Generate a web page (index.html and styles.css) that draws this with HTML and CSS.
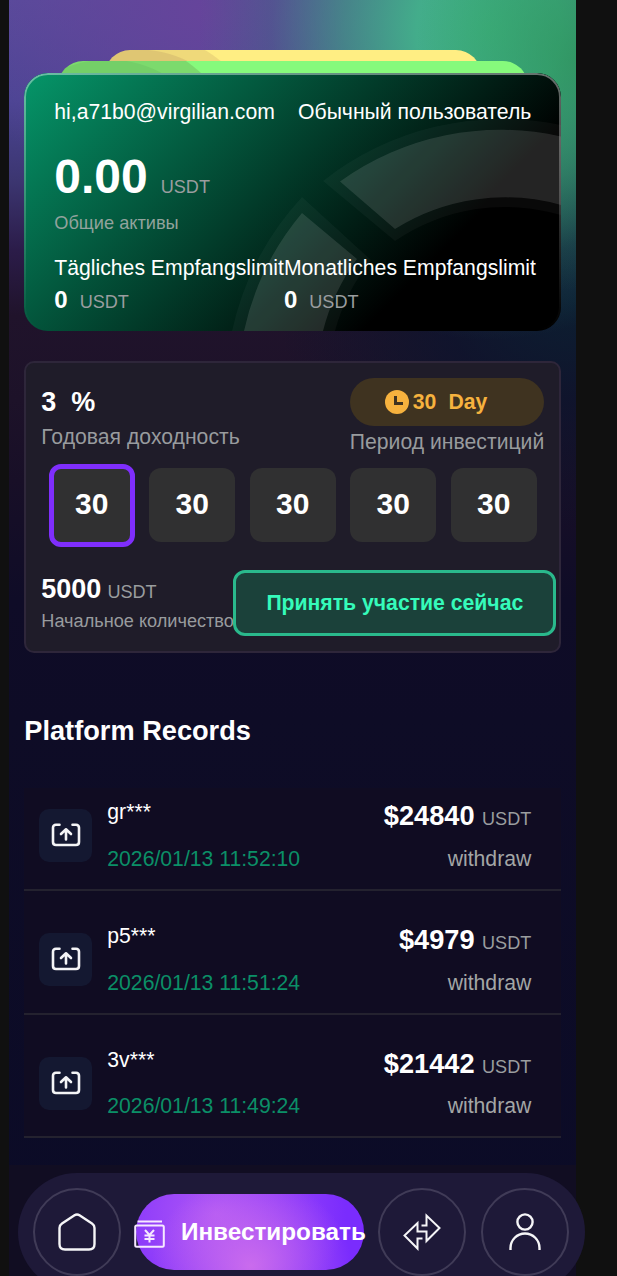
FILE: index.html
```html
<!DOCTYPE html>
<html lang="ru">
<head>
    <meta charset="UTF-8">
    <meta name="viewport" content="width=device-width, initial-scale=1.0">
    <title>Platform</title>
    <link rel="stylesheet" href="styles.css">
</head>
<body>
    <svg class="sprite" xmlns="http://www.w3.org/2000/svg">
        <symbol id="withdraw" viewBox="0 0 30 24" fill="none" stroke="#f4f4f6" stroke-width="2.600" stroke-linecap="round" stroke-linejoin="round">
            <path d="M8.500 1.800H5Q2 1.800 2 4.800V19Q2 22 5 22H25Q28 22 28 19V4.800Q28 1.800 25 1.800H21.500"/>
            <path d="M15 16.500V7M10 11L15 6.300L20 11"/>
        </symbol>
    </svg>

    <div class="app">
        <div class="stack">
            <div class="sheet sheet-yellow"></div>
            <div class="sheet sheet-green"></div>
        </div>

        <section class="card">
            <svg class="card-art" viewBox="24 73 537 258">
                <g fill="#fff" fill-opacity=".035">
                    <path d="M323 181A289 289 0 0 1 561 125V215A196 196 0 0 0 395 241Z"/>
                    <path d="M302 197L371 260A196 196 0 0 0 335 331H232A289 289 0 0 1 302 197Z"/>
                </g>
                <g fill="#fff" fill-opacity=".11">
                    <path d="M340 181.500A275 275 0 0 1 561 136.500V205A208 208 0 0 0 395 229Z"/>
                    <path d="M302 213L357 259A208 208 0 0 0 323 331H244A275 275 0 0 1 302 213Z"/>
                </g>
            </svg>
            <div class="card-head">
                <span>hi,a71b0@virgilian.com</span>
                <span class="level">Обычный пользователь</span>
            </div>
            <div class="balance"><b>0.00</b><span class="unit">USDT</span></div>
            <div class="balance-label">Общие активы</div>
            <div class="limits">
                <div class="limit">
                    <div>Tägliches Empfangslimit</div>
                    <div class="limit-value"><b>0</b><span class="unit">USDT</span></div>
                </div>
                <div class="limit">
                    <div>Monatliches Empfangslimit</div>
                    <div class="limit-value"><b>0</b><span class="unit">USDT</span></div>
                </div>
            </div>
        </section>

        <section class="plan">
            <div class="plan-head">
                <div class="rate">
                    <div class="rate-value"><b>3</b><b>%</b></div>
                    <div class="muted">Годовая доходность</div>
                </div>
                <div class="period">
                    <div class="period-pill">
                        <svg class="clock" viewBox="0 0 24 24">
                            <circle cx="12" cy="12" r="12" fill="#f6b23e"/>
                            <path d="M10.500 6V13.500H18" fill="none" stroke="#3f3320" stroke-width="3"/>
                        </svg>
                        <b>30</b><b>Day</b>
                    </div>
                    <div class="muted">Период инвестиций</div>
                </div>
            </div>
            <div class="days">
                <div class="day active">30</div>
                <div class="day">30</div>
                <div class="day">30</div>
                <div class="day">30</div>
                <div class="day">30</div>
            </div>
            <div class="plan-foot">
                <div class="amount">
                    <div class="amount-value"><b>5000</b><span class="unit">USDT</span></div>
                    <div class="amount-label">Начальное количество</div>
                </div>
                <button class="join">Принять участие сейчас</button>
            </div>
        </section>

        <h2 class="title">Platform Records</h2>

        <section class="records">
            <div class="record">
                <div class="record-icon"><svg><use href="#withdraw"/></svg></div>
                <div class="record-info">
                    <div class="name">gr***</div>
                    <div class="date">2026/01/13 11:52:10</div>
                </div>
                <div class="record-sum">
                    <div class="sum"><b>$24840</b><span class="unit">USDT</span></div>
                    <div class="type">withdraw</div>
                </div>
            </div>
            <div class="record">
                <div class="record-icon"><svg><use href="#withdraw"/></svg></div>
                <div class="record-info">
                    <div class="name">p5***</div>
                    <div class="date">2026/01/13 11:51:24</div>
                </div>
                <div class="record-sum">
                    <div class="sum"><b>$4979</b><span class="unit">USDT</span></div>
                    <div class="type">withdraw</div>
                </div>
            </div>
            <div class="record">
                <div class="record-icon"><svg><use href="#withdraw"/></svg></div>
                <div class="record-info">
                    <div class="name">3v***</div>
                    <div class="date">2026/01/13 11:49:24</div>
                </div>
                <div class="record-sum">
                    <div class="sum"><b>$21442</b><span class="unit">USDT</span></div>
                    <div class="type">withdraw</div>
                </div>
            </div>
        </section>

        <footer class="footer">
            <nav class="tabs">
                <a class="tab">
                    <svg width="38" height="38" viewBox="0 0 38 38" fill="none" stroke="#f5f5f7" stroke-width="2.400" stroke-linejoin="round">
                        <path d="M16.500 2.300Q19 .700 21.500 2.300L34 10.500Q36.500 12.200 36.500 15V31Q36.500 36.500 31 36.500H7Q1.500 36.500 1.500 31V15Q1.500 12.200 4 10.500Z"/>
                    </svg>
                </a>
                <a class="tab-active">
                    <svg width="31" height="28" viewBox="0 0 31 28" fill="none" stroke="#f6e9ff" stroke-width="2">
                        <path d="M3.500 1.500H28"/>
                        <rect x="1.200" y="5.500" width="28.600" height="21.300" rx="1.500"/>
                        <path d="M11 10L15.500 15L20 10M15.500 15V22.500M10.500 15.500H20.500M10.500 19H20.500"/>
                    </svg>
                    <b>Инвестировать</b>
                </a>
                <a class="tab">
                    <svg width="38" height="38" viewBox="0 0 38 38" fill="none" stroke="#f5f5f7" stroke-width="2">
                        <path d="M18.500 12.500H23.500V2.500L36.500 15L23.500 28V18.500H14.500V10L1.500 22.500L14.500 35.500V25.500H19.500"/>
                    </svg>
                </a>
                <a class="tab">
                    <svg width="32" height="38" viewBox="0 0 32 38" fill="none" stroke="#f5f5f7" stroke-width="2.400">
                        <circle cx="16" cy="9" r="7.600"/>
                        <path d="M1.500 37V35A14.500 14.500 0 0 1 30.500 35V37"/>
                    </svg>
                </a>
            </nav>
        </footer>
    </div>
</body>
</html>
```
FILE: styles.css
```css
* {
    box-sizing: border-box;
}

html,
body {
    margin: 0;
    height: 1276px;
    overflow: hidden;
}

body {
    background: #101010;
    color: #fff;
    font-family: "Liberation Sans", Arial, sans-serif;
    font-size: 21.2px;
    line-height: 24px;
    padding-left: 9.3px;
    white-space: nowrap;
}

.sprite {
    display: none;
}

.app {
    width: 567px;
    height: 1276px;
    padding: 50px 15px 0;
    background:
        radial-gradient(ellipse 160px 230px at 567px 60px, rgba(42, 145, 84, .7) 0, rgba(42, 145, 84, 0) 100%),
        radial-gradient(ellipse 290px 310px at 480px 30px, #40b384 0, rgba(66, 178, 138, .95) 25%, rgba(60, 160, 130, .68) 50%, rgba(45, 120, 120, .28) 75%, rgba(20, 80, 90, 0) 100%),
        radial-gradient(ellipse 260px 200px at 200px 10px, #66449b 0, rgba(102, 68, 155, 0) 100%),
        radial-gradient(ellipse 300px 230px at 567px 300px, rgba(10, 32, 50, .9) 0, rgba(10, 20, 45, .7) 45%, rgba(10, 20, 45, 0) 100%),
        linear-gradient(to bottom, #574b9b 0, #4b4594 100px, #3c3671 180px, #2b1c49 250px, #20132b 315px, #1d1229 400px, #180f27 480px, #0f0c27 600px, #0e0c26 720px, #0b0b27 100%);
}

/* the two sheets behind the main card */
.stack {
    height: 23px;
    display: flex;
    flex-direction: column;
    align-items: center;
    overflow: hidden;
}

.sheet {
    flex: none;
    height: 50px;
    border-radius: 34px;
}

.sheet-yellow {
    width: 376px;
    background: radial-gradient(circle at 33px 112px, #dfc673 0 112px, #efd97a 113px 130px, #ffee83 131px);
}

.sheet-green {
    width: 470px;
    margin-top: -39px;
    background: radial-gradient(circle at 50px 112px, #74cf68 0 113px, #7cda6d 114px 136px, #86fa7c 137px);
}

.card {
    position: relative;
    height: 258px;
    padding: 27px 30px 0;
    border-radius: 24px;
    background: linear-gradient(135deg, #059669 0, #000 75%);
    overflow: hidden;
}

.card::after {
    content: "";
    position: absolute;
    inset: 0;
    border: 2px solid rgba(255, 255, 255, .4);
    border-radius: 24px;
    -webkit-mask-image: linear-gradient(to bottom, #000, transparent);
    mask-image: linear-gradient(to bottom, #000, transparent);
}

.card-art {
    position: absolute;
    inset: 0;
    width: 100%;
    height: 100%;
}

.card-head,
.balance,
.balance-label,
.limits {
    position: relative;
}

.card-head {
    display: flex;
    justify-content: space-between;
}

.unit {
    color: #9a9d9f;
    font-size: 18.100px;
}

.balance {
    height: 56px;
    margin-top: 25px;
    line-height: 56px;
}

.balance b {
    font-size: 48px;
    margin-right: 13px;
}

.balance-label {
    margin-top: 6px;
    color: #92a39d;
    font-size: 18.200px;
}

.limits {
    display: flex;
    margin-top: 21px;
}

.limit-value {
    margin-top: 8px;
}

.limit-value b {
    font-size: 24px;
    margin-right: 12px;
}

.plan {
    height: 292px;
    margin-top: 30px;
    padding: 15px 15px 0;
    border: 2px solid #2e263a;
    border-radius: 10px;
    background: #1f1c29;
}

.plan-head {
    display: flex;
    justify-content: space-between;
}

.muted {
    color: #989b9e;
}

.rate-value {
    height: 48px;
    display: flex;
    gap: 15px;
    font-size: 27px;
    line-height: 48px;
}

.rate .muted {
    margin-top: -1px;
}

.period-pill {
    display: flex;
    align-items: center;
    height: 48px;
    padding-left: 35px;
    border-radius: 24px;
    background: #3f3320;
    color: #f6b23e;
}

.clock {
    width: 24px;
    height: 24px;
    margin-right: 4px;
}

.period-pill b + b {
    margin-left: 12px;
}

.period .muted {
    margin-top: 4px;
}

.days {
    display: flex;
    align-items: center;
    gap: 14.500px;
    height: 84px;
    margin: 9px 0 0 7.400px;
}

.day {
    flex: none;
    width: 86px;
    height: 74px;
    border-radius: 12px;
    background: #303031;
    font-size: 30px;
    font-weight: bold;
    line-height: 72px;
    text-align: center;
}

.day.active {
    height: 83px;
    border: 5px solid #7f2efc;
    line-height: 70px;
}

.plan-foot {
    display: flex;
    margin-top: 23px;
}

.amount {
    flex: none;
    width: 192px;
    padding-top: 7px;
}

.amount-value b {
    font-size: 27px;
    margin-right: 6px;
}

.amount-label {
    margin-top: 5px;
    color: #989b9e;
    font-size: 18.150px;
}

.join {
    flex: none;
    width: 323px;
    height: 66px;
    padding: 0;
    border: 3px solid #2ab98c;
    border-radius: 12px;
    background: #1b413a;
    color: #35fbba;
    font: bold 21.200px "Liberation Sans", Arial, sans-serif;
}

.title {
    margin: 62px 0 0;
    font-size: 27.200px;
    line-height: 32px;
}

.records {
    margin-top: 41px;
    background: #100c22;
}

.record {
    display: flex;
    height: 124px;
    padding: 10px 30px 0 15px;
    border-bottom: 2px solid #24222f;
}

.record:first-child {
    height: 103px;
    padding-top: 0;
}

.record:last-child {
    height: 123px;
}

.record-icon {
    display: flex;
    align-items: center;
    justify-content: center;
    width: 53px;
    height: 53px;
    margin-top: 21px;
    border-radius: 10px;
    background: #141831;
}

.record:not(:first-child) .record-icon {
    margin-top: 32px;
}

.record-icon svg {
    width: 30px;
    height: 24px;
    margin-top: -1px;
}

.record-info {
    margin: 12px 0 0 15px;
}

.record:not(:first-child) .record-info,
.record:not(:first-child) .record-sum {
    margin-top: 23px;
}

.date {
    margin-top: 23px;
    color: #0b8f67;
}

.record:last-child .date {
    margin-top: 22px;
}

.record-sum {
    margin: 12px 0 0 auto;
    text-align: right;
}

.sum {
    padding-top: 4px;
}

.sum b {
    font-size: 27.200px;
    margin-right: 7.500px;
}

.type {
    margin-top: 16px;
    color: #a3a6a6;
}

.record:last-child .type {
    margin-top: 15px;
}

.footer {
    height: 111px;
    margin: 27px -24px 0 -15px;
    padding: 8px 0 0 8.700px;
    background: linear-gradient(to right, #110d22 567px, transparent 567px);
}

.tabs {
    display: flex;
    align-items: center;
    width: 567px;
    height: 118px;
    padding-left: 15px;
    border-radius: 59px;
    background: #1e1938;
}

.tab {
    flex: none;
    display: flex;
    align-items: center;
    justify-content: center;
    width: 88px;
    height: 88px;
    border: 2px solid #403b57;
    border-radius: 50%;
}

.tab + .tab {
    margin-left: 15px;
}

.tab-active {
    flex: none;
    display: flex;
    align-items: center;
    width: 228px;
    height: 76px;
    margin: 0 14px 0 15px;
    border-radius: 38px;
    background:
        radial-gradient(ellipse 100px 90px at 115px 72px, rgba(208, 112, 236, .9) 0, rgba(200, 105, 238, 0) 100%),
        radial-gradient(ellipse 130px 110px at 80px 20px, #b058f5 0, #7a2cfd 100%);
    font-size: 24.300px;
}

.tab-active svg {
    flex: none;
    margin: 3px 16px 0 -2px;
}
```
